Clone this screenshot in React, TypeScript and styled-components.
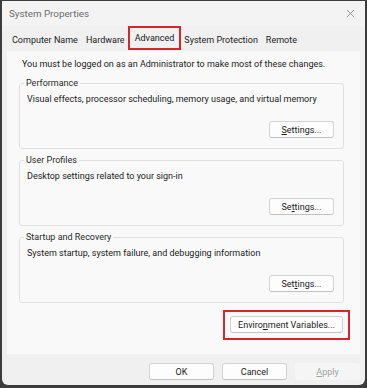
import styled, { createGlobalStyle } from "styled-components";

const GlobalStyle = createGlobalStyle`
  html, body {
    margin: 0;
    padding: 0;
    background: #3c3c3c;
  }
  body {
    font-family: Roboto, "Liberation Sans", sans-serif;
    font-size: 9px;
    color: #1a1a1a;
  }
`;

const groups = [
  {
    title: "Performance",
    text: "Visual effects, processor scheduling, memory usage, and virtual memory",
    key: 0,
  },
  { title: "User Profiles", text: "Desktop settings related to your sign-in", key: 2 },
  {
    title: "Startup and Recovery",
    text: "System startup, system failure, and debugging information",
    key: 3,
  },
];

const tabs = ["Computer Name", "Hardware", "Advanced", "System Protection", "Remote"];

const withKey = (label: string, index: number) => (
  <>
    {label.slice(0, index)}
    <u>{label[index]}</u>
    {label.slice(index + 1)}
  </>
);

const App = () => {
  return (
    <>
      <GlobalStyle />
      <Window>
        <TitleBar>
          <Title>System Properties</Title>
          <CloseIcon viewBox="0 0 10 10">
            <path d="M1 1 L9 9 M9 1 L1 9" />
          </CloseIcon>
        </TitleBar>
        <TabStrip>
          {tabs.map((tab) => (
            <Tab key={tab} active={tab === "Advanced"}>
              {tab}
            </Tab>
          ))}
        </TabStrip>
        <Panel>
          <Notice>You must be logged on as an Administrator to make most of these changes.</Notice>
          {groups.map((group) => (
            <Group key={group.title}>
              <Legend>{group.title}</Legend>
              <Description>{group.text}</Description>
              <ButtonRow>
                <Button>{withKey("Settings...", group.key)}</Button>
              </ButtonRow>
            </Group>
          ))}
          <EnvRow>
            <Highlight>
              <Button wide>{withKey("Environment Variables...", 6)}</Button>
            </Highlight>
          </EnvRow>
        </Panel>
        <Footer>
          <Button>OK</Button>
          <Button>Cancel</Button>
          <Button disabled>{withKey("Apply", 0)}</Button>
        </Footer>
      </Window>
    </>
  );
};

const Window = styled.div`
  display: flex;
  flex-direction: column;
  margin: 1px 2px 0 2px;
  height: 384px;
  background: #f0f0f0;
  border-radius: 0 0 6px 6px;
  box-sizing: border-box;
  overflow: hidden;
`;

const TitleBar = styled.div`
  display: flex;
  align-items: center;
  justify-content: space-between;
  height: 25px;
  padding: 0 10px 0 7px;
  background: #f3f3f3;
`;

const Title = styled.span`
  font-size: 9.8px;
  color: #6e6e6e;
`;

const CloseIcon = styled.svg`
  width: 9px;
  height: 9px;
  fill: none;
  stroke: #8a8a8a;
  stroke-width: 1;
`;

const TabStrip = styled.div`
  display: flex;
  align-items: flex-end;
  height: 25px;
  padding-left: 7px;
  gap: 2px;
`;

const Tab = styled.div<{ active?: boolean }>`
  box-sizing: border-box;
  height: ${(p) => (p.active ? "24px" : "19px")};
  line-height: ${(p) => (p.active ? "20px" : "17px")};
  margin: ${(p) => (p.active ? "0 -2px 1px" : "0")};
  border: ${(p) => (p.active ? "2px solid #d4262b" : "none")};
  padding: ${(p) => (p.active ? "0 5px" : "0 3px")};
  white-space: nowrap;
`;

const Panel = styled.div`
  display: flex;
  flex-direction: column;
  margin: 0 5px;
  height: 303px;
  padding: 6px 16px 0 12px;
  box-sizing: border-box;
  background: #f9f9f9;
`;

const Notice = styled.div`
  line-height: 15px;
  padding-left: 3px;
  margin-bottom: 4px;
  white-space: nowrap;
`;

const Group = styled.fieldset`
  display: flex;
  flex-direction: column;
  margin: 0 0 4px;
  padding: 0 9px 10px 4px;
  border: 1px solid #e0e0e0;
  border-radius: 3px;
  min-width: 0;
`;

const Legend = styled.legend`
  padding: 0 2px;
  line-height: 15px;
  color: #2a2a2a;
`;

const Description = styled.div`
  line-height: 15px;
  padding-left: 3px;
  margin-top: 1px;
  white-space: nowrap;
`;

const ButtonRow = styled.div`
  display: flex;
  justify-content: flex-end;
  margin-top: 14px;
`;

const Button = styled.button<{ wide?: boolean }>`
  box-sizing: border-box;
  width: ${(p) => (p.wide ? "113px" : "65px")};
  height: 17px;
  padding: 0;
  font-family: inherit;
  font-size: 9px;
  color: ${(p) => (p.disabled ? "#a3a3a3" : "#1a1a1a")};
  background: ${(p) => (p.disabled ? "#f5f5f5" : "#fdfdfd")};
  border: 1px solid ${(p) => (p.disabled ? "#f5f5f5" : "#d3d3d3")};
  border-bottom-color: ${(p) => (p.disabled ? "#f5f5f5" : "#c2c2c2")};
  border-radius: 3px;
`;

const EnvRow = styled.div`
  display: flex;
  justify-content: flex-end;
  margin-top: 3px;
  margin-right: -6px;
`;

const Highlight = styled.div`
  display: flex;
  padding: 4px 5px 5px 5px;
  border: 2px solid #d4262b;
`;

const Footer = styled.div`
  display: flex;
  justify-content: flex-end;
  gap: 8px;
  padding: 9px 5px 0 0;
`;

export default App;
